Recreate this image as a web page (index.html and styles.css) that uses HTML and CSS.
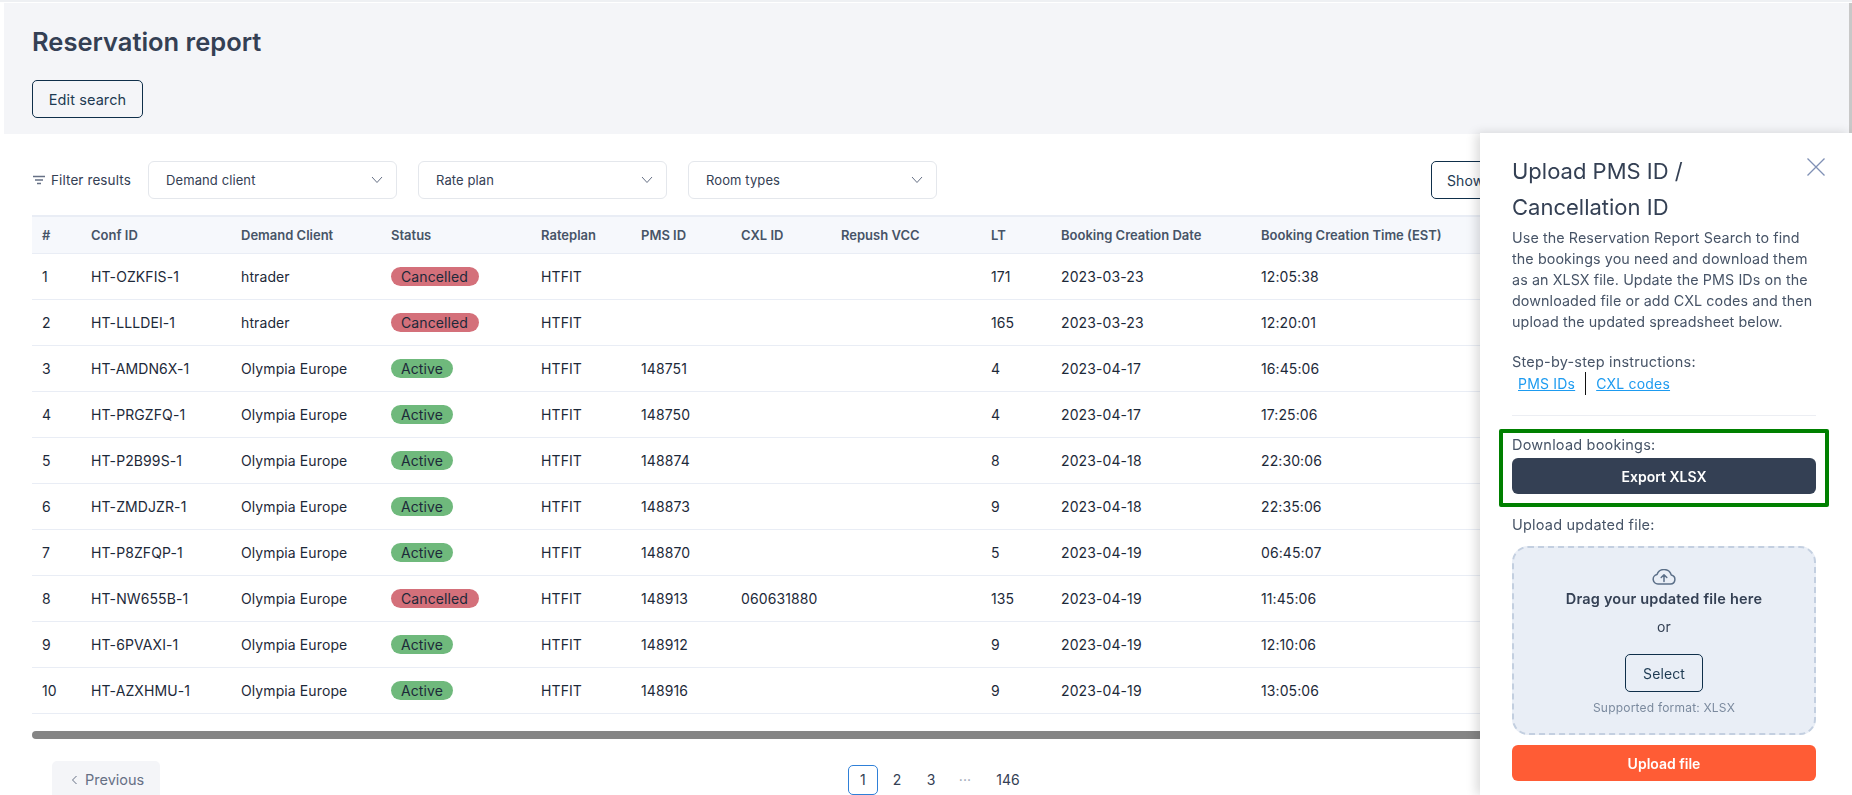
FILE: index.html
```html
<!DOCTYPE html>
<html lang="en">
<head>
    <meta charset="UTF-8">
    <title>Reservation report</title>
    <link rel="stylesheet" href="styles.css">
</head>
<body>
    <!-- Page header -->
    <div class="page-header">
        <h1>Reservation report</h1>
        <button class="btn-outline btn-edit">Edit search</button>
    </div>

    <!-- Filters -->
    <div class="filter-row">
        <div class="filter-label">
            <svg width="14" height="10" viewBox="0 0 14 10" fill="none" stroke="#667085" stroke-width="1.4"><path d="M1 1.5h12M3 5h8M5 8.5h4"/></svg>
            <span>Filter results</span>
        </div>
        <div class="filter-select">Demand client
            <svg width="12" height="8" viewBox="0 0 12 8" fill="none" stroke="#667085" stroke-width="1"><path d="M1 1l5 5.500L11 1"/></svg>
        </div>
        <div class="filter-select">Rate plan
            <svg width="12" height="8" viewBox="0 0 12 8" fill="none" stroke="#667085" stroke-width="1"><path d="M1 1l5 5.500L11 1"/></svg>
        </div>
        <div class="filter-select">Room types
            <svg width="12" height="8" viewBox="0 0 12 8" fill="none" stroke="#667085" stroke-width="1"><path d="M1 1l5 5.500L11 1"/></svg>
        </div>
        <button class="btn-outline btn-show">Show</button>
    </div>

    <!-- Report table -->
    <table class="report-table">
        <thead>
            <tr>
                <th class="col-num">#</th>
                <th class="col-150">Conf ID</th>
                <th class="col-150">Demand Client</th>
                <th class="col-150">Status</th>
                <th class="col-100">Rateplan</th>
                <th class="col-100">PMS ID</th>
                <th class="col-100">CXL ID</th>
                <th class="col-150">Repush VCC</th>
                <th class="col-lt">LT</th>
                <th class="col-date">Booking Creation Date</th>
                <th class="col-time">Booking Creation Time (EST)</th>
            </tr>
        </thead>
        <tbody>
            <tr><td>1</td><td>HT-OZKFIS-1</td><td>htrader</td><td><span class="badge badge-cancelled">Cancelled</span></td><td>HTFIT</td><td></td><td></td><td></td><td>171</td><td>2023-03-23</td><td>12:05:38</td></tr>
            <tr><td>2</td><td>HT-LLLDEI-1</td><td>htrader</td><td><span class="badge badge-cancelled">Cancelled</span></td><td>HTFIT</td><td></td><td></td><td></td><td>165</td><td>2023-03-23</td><td>12:20:01</td></tr>
            <tr><td>3</td><td>HT-AMDN6X-1</td><td>Olympia Europe</td><td><span class="badge badge-active">Active</span></td><td>HTFIT</td><td>148751</td><td></td><td></td><td>4</td><td>2023-04-17</td><td>16:45:06</td></tr>
            <tr><td>4</td><td>HT-PRGZFQ-1</td><td>Olympia Europe</td><td><span class="badge badge-active">Active</span></td><td>HTFIT</td><td>148750</td><td></td><td></td><td>4</td><td>2023-04-17</td><td>17:25:06</td></tr>
            <tr><td>5</td><td>HT-P2B99S-1</td><td>Olympia Europe</td><td><span class="badge badge-active">Active</span></td><td>HTFIT</td><td>148874</td><td></td><td></td><td>8</td><td>2023-04-18</td><td>22:30:06</td></tr>
            <tr><td>6</td><td>HT-ZMDJZR-1</td><td>Olympia Europe</td><td><span class="badge badge-active">Active</span></td><td>HTFIT</td><td>148873</td><td></td><td></td><td>9</td><td>2023-04-18</td><td>22:35:06</td></tr>
            <tr><td>7</td><td>HT-P8ZFQP-1</td><td>Olympia Europe</td><td><span class="badge badge-active">Active</span></td><td>HTFIT</td><td>148870</td><td></td><td></td><td>5</td><td>2023-04-19</td><td>06:45:07</td></tr>
            <tr><td>8</td><td>HT-NW655B-1</td><td>Olympia Europe</td><td><span class="badge badge-cancelled">Cancelled</span></td><td>HTFIT</td><td>148913</td><td>060631880</td><td></td><td>135</td><td>2023-04-19</td><td>11:45:06</td></tr>
            <tr><td>9</td><td>HT-6PVAXI-1</td><td>Olympia Europe</td><td><span class="badge badge-active">Active</span></td><td>HTFIT</td><td>148912</td><td></td><td></td><td>9</td><td>2023-04-19</td><td>12:10:06</td></tr>
            <tr><td>10</td><td>HT-AZXHMU-1</td><td>Olympia Europe</td><td><span class="badge badge-active">Active</span></td><td>HTFIT</td><td>148916</td><td></td><td></td><td>9</td><td>2023-04-19</td><td>13:05:06</td></tr>
        </tbody>
    </table>

    <div class="table-scrollbar"></div>

    <!-- Pagination -->
    <div class="pagination">
        <div class="pager-left">
            <button class="btn-prev">
                <svg width="7" height="10" viewBox="0 0 7 10" fill="none" stroke="#667085" stroke-width="1"><path d="M5.500 1L1.500 5l4 4"/></svg>
                Previous
            </button>
        </div>
        <span class="page-num page-current">1</span>
        <span class="page-num">2</span>
        <span class="page-num">3</span>
        <span class="page-num page-dots">&middot;&middot;&middot;</span>
        <span class="page-num page-last">146</span>
    </div>

    <!-- Upload drawer -->
    <div class="drawer">
        <svg class="drawer-close" width="20" height="20" viewBox="0 0 20 20" fill="none" stroke="#7f90b5" stroke-width="1.3"><path d="M1.500 1.500l17 17M18.500 1.500l-17 17"/></svg>
        <h2>Upload PMS ID / Cancellation ID</h2>
        <p class="drawer-text">Use the Reservation Report Search to find the bookings you need and download them as an XLSX file. Update the PMS IDs on the downloaded file or add CXL codes and then upload the updated spreadsheet below.</p>
        <div class="drawer-label steps-label">Step-by-step instructions:</div>
        <div class="steps-links">
            <a href="#">PMS IDs</a>
            <span class="steps-sep"></span>
            <a href="#">CXL codes</a>
        </div>
        <hr class="drawer-rule">
        <div class="download-box">
            <div class="drawer-label">Download bookings:</div>
            <button class="btn-solid btn-dark">Export XLSX</button>
        </div>
        <div class="drawer-label upload-label">Upload updated file:</div>
        <div class="dropzone">
            <svg width="24" height="16" viewBox="0 0 24 16" fill="none" stroke="#5b6f88" stroke-width="1.500" stroke-linecap="round" stroke-linejoin="round"><path d="M6 15h12.500a4.500 4.500 0 0 0 .8-8.900A7.500 7.500 0 0 0 5 5.500 4.800 4.800 0 0 0 6 15z"/><path d="M12 12.500V6M9.200 8.500L12 5.800l2.800 2.700"/></svg>
            <div class="drop-title">Drag your updated file here</div>
            <div class="drop-or">or</div>
            <button class="btn-outline btn-select">Select</button>
            <div class="drop-note">Supported format: XLSX</div>
        </div>
        <button class="btn-solid btn-orange">Upload file</button>
    </div>
</body>
</html>
```

FILE: styles.css
```css
* {
    box-sizing: border-box;
}

html, body {
    height: 100%;
    overflow: hidden;
}

body {
    margin: 0;
    font-family: Inter, "Noto Sans", sans-serif;
    font-size: 14px;
    letter-spacing: 0.1px;
    color: #1d2939;
    background: #fff;
    border-top: 2px solid #eef0f3;
}

/* Header */
.page-header {
    height: 131px;
    margin: 1px 0 0 4px;
    padding: 22px 28px 0;
    background: #f4f5f8;
    border-right: 3px solid #c8c8c8;
}

h1 {
    margin: 0 0 21px;
    font-size: 25.500px;
    line-height: 34px;
    font-weight: 600;
    letter-spacing: 0;
    color: #344054;
}

.btn-outline {
    height: 38px;
    padding: 0 15px;
    background: transparent;
    border: 1px solid #0f2f4a;
    border-radius: 5px;
    font-family: inherit;
    font-size: 14px;
    letter-spacing: 0.1px;
    color: #1d3a52;
}

.btn-edit {
    width: 111px;
    padding: 0;
    font-size: 14.500px;
}

/* Filters */
.filter-row {
    display: flex;
    align-items: center;
    gap: 21px;
    height: 38px;
    margin: 27px 0 16px;
    padding: 0 32px;
}

.filter-label {
    display: flex;
    align-items: center;
    gap: 5px;
    width: 95px;
    font-size: 13.500px;
    color: #344054;
    white-space: nowrap;
}

.filter-label svg {
    flex: none;
}

.filter-select {
    display: flex;
    align-items: center;
    justify-content: space-between;
    width: 249px;
    height: 38px;
    padding: 0 13px 0 17px;
    border: 1px solid #e4e7ec;
    border-radius: 6px;
    font-size: 13px;
    color: #344054;
}

.btn-show {
    width: 170px;
    margin-left: 473px;
    text-align: left;
}

/* Table */
.report-table {
    width: 1660px;
    margin-left: 32px;
    table-layout: fixed;
    border-collapse: collapse;
    border-top: 2px solid #e9edf5;
}

.report-table th {
    height: 37px;
    padding: 0 10px;
    background: #f6f8fc;
    border-bottom: 1px solid #e9edf5;
    font-size: 13px;
    font-weight: 600;
    letter-spacing: 0;
    text-align: left;
    color: #475467;
    white-space: nowrap;
}

.report-table td {
    height: 46px;
    padding: 0 10px;
    border-bottom: 1px solid #e9edf5;
    white-space: nowrap;
}

.col-num { width: 49px; }
.col-150 { width: 150px; }
.col-100 { width: 100px; }
.col-lt { width: 70px; }
.col-date { width: 200px; }
.col-time { width: 441px; }

.badge {
    display: inline-block;
    height: 19px;
    padding: 0 10px;
    border-radius: 10px;
    line-height: 19px;
    font-size: 14px;
    color: #1d2939;
}

.badge-cancelled {
    min-width: 88px;
    background: #d4707a;
}

.badge-active {
    min-width: 61px;
    background: #6fb97c;
}

.table-scrollbar {
    width: 1640px;
    height: 8px;
    margin: 17px 0 0 32px;
    border-radius: 4px;
    background: #858585;
}

/* Pagination */
.pagination {
    display: flex;
    align-items: center;
    margin-top: 22px;
    padding-left: 52px;
}

.pager-left {
    width: 796px;
}

.btn-prev {
    display: flex;
    align-items: center;
    gap: 7px;
    width: 108px;
    height: 38px;
    padding: 0 0 0 19px;
    background: #f4f5f8;
    border: 0;
    border-radius: 5px;
    font-family: inherit;
    font-size: 14.500px;
    color: #667085;
}

.page-num {
    min-width: 30px;
    height: 30px;
    margin-right: 4px;
    line-height: 30px;
    text-align: center;
    color: #344054;
}

.page-current {
    border: 1px solid #2f80d8;
    border-radius: 5px;
    line-height: 28px;
}

.page-dots {
    color: #98a2b3;
}

.page-last {
    margin-left: 9px;
}

/* Drawer */
.drawer {
    position: fixed;
    top: 133px;
    right: 0;
    bottom: 0;
    width: 372px;
    padding: 20px 36px 0 32px;
    background: #fff;
    box-shadow: -4px 0 10px rgba(0, 0, 0, 0.14);
    font-size: 14px;
    letter-spacing: 0.2px;
    color: #475467;
}

.drawer-close {
    position: absolute;
    top: 24px;
    right: 26px;
}

h2 {
    margin: 0;
    width: 260px;
    font-size: 22px;
    line-height: 36px;
    font-weight: 400;
    letter-spacing: 0;
    color: #344054;
}

.drawer-text {
    margin: 2px 0 0;
    font-size: 14.300px;
    line-height: 21px;
    letter-spacing: 0.1px;
}

.drawer-label {
    font-size: 14.500px;
    line-height: 21px;
}

.steps-label {
    margin-top: 19px;
}

.steps-links {
    display: flex;
    align-items: center;
    height: 23px;
    padding-left: 6px;
}

.steps-links a {
    color: #1d9bf0;
}

.steps-sep {
    width: 1px;
    height: 23px;
    margin: 0 10px;
    background: #111;
}

.drawer-rule {
    height: 1px;
    margin: 20px 0 13px;
    border: 0;
    background: #eceef3;
}

.download-box {
    margin: 0 -13px;
    padding: 1px 9px 0;
    height: 78px;
    border: 4px solid #008000;
    border-radius: 2px;
}

.btn-solid {
    display: block;
    width: 100%;
    height: 36px;
    border: 0;
    border-radius: 6px;
    font-family: inherit;
    font-size: 14px;
    font-weight: 600;
    color: #fff;
}

.btn-dark {
    margin-top: 3px;
    background: #344054;
}

.btn-orange {
    margin-top: 10px;
    background: #ff5c35;
}

.upload-label {
    margin-top: 7px;
}

.dropzone {
    display: flex;
    flex-direction: column;
    align-items: center;
    height: 189px;
    margin-top: 11px;
    padding-top: 21px;
    background: #e9eef6;
    border: 2px dashed #c3cfe0;
    border-radius: 16px;
}

.drop-title {
    margin-top: 3px;
    font-size: 14.500px;
    line-height: 21px;
    font-weight: 600;
    color: #344054;
}

.drop-or {
    margin-top: 7px;
    line-height: 21px;
    color: #344054;
}

.btn-select {
    width: 78px;
    margin-top: 17px;
}

.drop-note {
    margin-top: 7px;
    font-size: 12px;
    line-height: 18px;
    color: #7b8a9e;
}
```
